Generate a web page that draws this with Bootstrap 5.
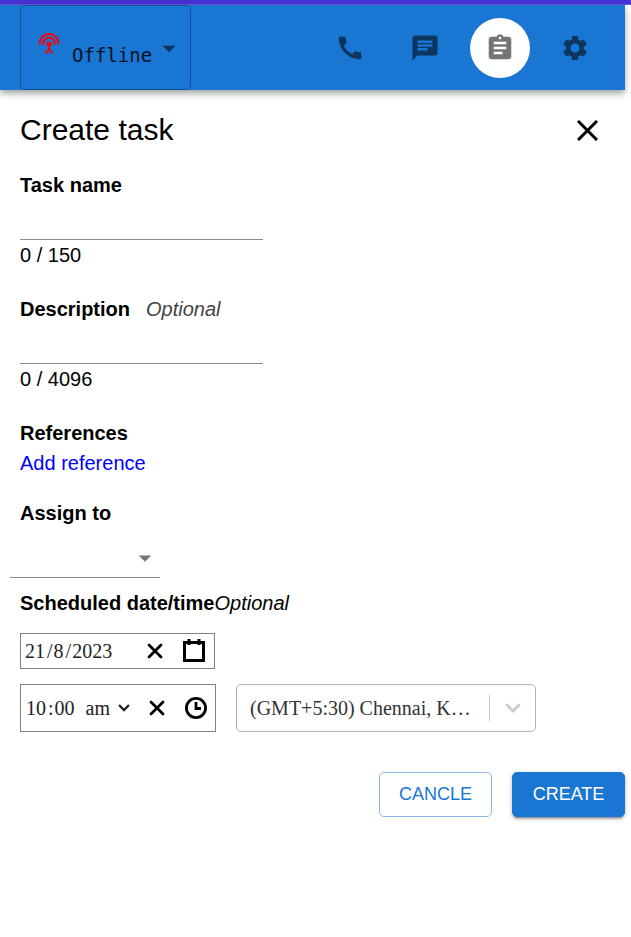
<!DOCTYPE html>
<html lang="en">
<head>
<meta charset="utf-8">
<meta name="viewport" content="width=device-width, initial-scale=1">
<title>Create task</title>
<link href="https://cdn.jsdelivr.net/npm/bootstrap@5.3.0/dist/css/bootstrap.min.css" rel="stylesheet">
<style>
  body { font-family: "Liberation Sans", Arial, sans-serif; font-size: 20px; line-height: 30px; color: #000; background: #fff; }
  .top-strip { height: 5px; background: #4733d6; border-bottom: 1px solid #6b59e0; }
  .page { margin-right: 6px; }
  .app-bar { background: #1976d2; height: 85px; padding: 0 20px; box-shadow: 0 3px 5px -1px rgba(0,0,0,.2), 0 5px 6px rgba(0,0,0,.14), 0 1px 12px rgba(0,0,0,.12); }
  .tab-icons { gap: 15px; }
  .status-btn { width: 171px; padding: 0 9px 0 17px; border: 1px solid #125394; border-radius: 5px; background: transparent; color: #04111f; font-family: "DejaVu Sans Mono", monospace; font-size: 19px; }
  .status-btn .label-text { padding: 14px 4px 0 10px; }
  .status-btn .signal { margin-bottom: 8px; color: red; }
  .status-btn .caret { color: #0c3661; }
  .bar-icon { width: 60px; height: 60px; border-radius: 50%; }
  .bar-icon svg { width: 30px; height: 30px; }
  svg { display: block; fill: currentColor; flex: none; }
  svg.line { fill: none; stroke: currentColor; }
  .plain-btn { padding: 0; border: 0; background: transparent; color: #000; }
  .plain-btn.bar-icon { color: #0c3661; }
  .plain-btn.bar-icon.active { background: #fff; color: #757575; }
  .task-form { padding: 20px 0 20px 20px; }
  .page-title { font-size: 30px; line-height: 40px; font-weight: 400; margin-bottom: 20px; }
  .close-btn { padding: 0 27px 20px 0; }
  .line-input { display: block; width: 243px; height: 40px; border: 0; border-bottom: 1px solid #8c8c8c; border-radius: 0; padding: 0; outline: 0; background: transparent; }
  .form-block { margin-bottom: 24px; }
  .muted-opt { color: #444; margin-left: 16px; }
  .add-link { color: #00f; text-decoration: none; margin-bottom: 20px; }
  .assign { width: 150px; margin: 10px 0 10px -10px; border-bottom: 1px solid #8c8c8c; }
  .assign svg { color: #757575; }
  .bare { appearance: none; border: 0; outline: 0; padding: 0; background: transparent; color: #222; }
  .assign select { width: 120px; height: 39px; }
  .picker { border: 1px solid #808080; font-family: "Liberation Serif", "Times New Roman", serif; color: #222; }
  .picker input { height: 28px; }
  .picker-actions { gap: 18px; }
  .date-box { width: 195px; height: 36px; margin: 15px 0; padding: 0 8px 0 4px; }
  .time-box { width: 196px; height: 48px; padding: 0 7px 0 5px; }
  .w1 { width: 11px; } .w2 { width: 21px; } .w4 { width: 42px; }
  .sep { padding: 0 1px; }
  .ampm { width: 32px; margin-left: 10px; }
  .time-row { gap: 20px; }
  .zone { width: 300px; height: 48px; border: 1px solid #b3b3b3; border-radius: 5px; padding-left: 13px; font-family: "Liberation Serif", "Times New Roman", serif; }
  .zone select { width: 222px; height: 44px; text-overflow: ellipsis; white-space: nowrap; overflow: hidden; color: #333; }
  .zone .divider { width: 1px; height: 26px; background: #ccc; margin-left: 17px; }
  .zone svg { color: #ccc; }
  .actions { gap: 20px; margin-top: 40px; }
  .action { width: 113px; height: 45px; border-radius: 5px; padding: 0; font-size: 18px; --bs-btn-color: #1976d2; --bs-btn-border-color: #8cbae8; }
  .action.filled { --bs-btn-color: #fff; --bs-btn-bg: #1976d2; --bs-btn-border-color: #1976d2; box-shadow: 0 3px 2px -2px rgba(0,0,0,.3), 0 2px 3px rgba(0,0,0,.2), 0 1px 6px rgba(0,0,0,.12); }
</style>
</head>
<body>
<div class="top-strip"></div>
<div class="page">
  <header class="app-bar d-flex justify-content-between align-items-stretch">
    <button type="button" class="status-btn d-flex align-items-center">
      <svg class="signal line" width="24" height="24" viewBox="0 0 24 24" stroke-width="2"><path d="M1.500 12.500V11.500A9.500 9.500 0 0 1 20.500 11.500V12.500M5.300 12.500V11.500A5.700 5.700 0 0 1 16.700 11.500V12.500"/><circle cx="11" cy="12" r="2.600" fill="red" stroke="none"/><path d="M11 12V17L7.500 21.500M11 17L14.500 21.500"/></svg>
      <span class="label-text">Offline</span>
      <svg class="caret" width="26" height="28" viewBox="0 0 24 24"><path d="M6 10l6 6 6-6z"/></svg>
    </button>
    <nav class="tab-icons d-flex align-items-center" aria-label="Main">
      <button type="button" class="plain-btn bar-icon d-flex align-items-center justify-content-center" aria-label="Calls"><svg viewBox="0 0 24 24"><path d="M20.010 15.380c-1.230 0-2.420-.2-3.530-.56-.35-.12-.74-.03-1.010.24l-1.570 1.970c-2.830-1.350-5.480-3.900-6.890-6.830l1.950-1.660c.27-.28.35-.67.24-1.020-.37-1.110-.56-2.300-.56-3.530 0-.54-.45-.99-.99-.99H4.190C3.650 3 3 3.240 3 3.990 3 13.280 10.730 21 20.010 21c.71 0 .99-.63.99-1.180v-3.450c0-.54-.45-.99-.99-.99z"/></svg></button>
      <button type="button" class="plain-btn bar-icon d-flex align-items-center justify-content-center" aria-label="Messages"><svg viewBox="0 0 24 24"><path d="M20 2H4c-1.100 0-1.990.9-1.990 2L2 22l4-4h14c1.100 0 2-.9 2-2V4c0-1.100-.9-2-2-2zM6 9h12v2H6V9zm8 5H6v-2h8v2zm4-6H6V6h12v2z"/></svg></button>
      <button type="button" class="plain-btn bar-icon active d-flex align-items-center justify-content-center" aria-label="Tasks"><svg viewBox="0 0 24 24"><path d="M19 3h-4.180C14.400 1.840 13.300 1 12 1c-1.300 0-2.400.84-2.820 2H5c-1.100 0-2 .9-2 2v14c0 1.100.9 2 2 2h14c1.100 0 2-.9 2-2V5c0-1.100-.9-2-2-2zm-7 0c.55 0 1 .45 1 1s-.45 1-1 1-1-.45-1-1 .45-1 1-1zm2 14H7v-2h7v2zm3-4H7v-2h10v2zm0-4H7V7h10v2z"/></svg></button>
      <button type="button" class="plain-btn bar-icon d-flex align-items-center justify-content-center" aria-label="Settings"><svg viewBox="0 0 24 24"><path d="M19.140 12.940c.04-.3.060-.61.060-.94 0-.32-.02-.64-.07-.94l2.030-1.580c.18-.14.230-.41.120-.61l-1.920-3.320c-.12-.22-.37-.29-.59-.22l-2.390.96c-.5-.38-1.030-.7-1.620-.94l-.36-2.540c-.04-.24-.24-.41-.48-.41h-3.840c-.24 0-.43.170-.47.410l-.36 2.540c-.59.240-1.130.570-1.620.940l-2.390-.96c-.22-.08-.47 0-.59.220L2.740 8.870c-.12.210-.08.470.120.610l2.030 1.580c-.05.300-.09.630-.09.940s.02.640.070.940l-2.030 1.580c-.18.140-.23.410-.12.610l1.920 3.320c.12.220.370.290.590.220l2.390-.96c.5.380 1.030.7 1.620.94l.36 2.540c.05.240.240.410.480.410h3.840c.24 0 .44-.17.470-.41l.36-2.540c.59-.24 1.130-.56 1.620-.94l2.390.96c.22.080.470 0 .59-.22l1.920-3.320c.12-.22.070-.47-.12-.61l-2.010-1.580zM12 15.600c-1.980 0-3.600-1.620-3.600-3.600s1.620-3.600 3.600-3.600 3.600 1.620 3.600 3.600-1.620 3.600-3.600 3.600z"/></svg></button>
    </nav>
  </header>

  <form class="task-form">
    <div class="d-flex justify-content-between align-items-center">
      <h1 class="page-title">Create task</h1>
      <button type="button" class="plain-btn close-btn" aria-label="Close"><svg class="line" width="21" height="21" viewBox="0 0 21 21" stroke-width="3"><path d="M1 1L20 20M20 1L1 20"/></svg></button>
    </div>

    <div class="form-block">
      <label class="d-block fw-bold" for="task-name">Task name</label>
      <input id="task-name" class="line-input" type="text" maxlength="150">
      <div>0 / 150</div>
    </div>

    <div class="form-block">
      <label class="d-block" for="task-desc"><b>Description</b><i class="muted-opt">Optional</i></label>
      <input id="task-desc" class="line-input" type="text" maxlength="4096">
      <div>0 / 4096</div>
    </div>

    <div class="fw-bold">References</div>
    <a class="add-link d-table" href="#">Add reference</a>

    <label class="d-block fw-bold" for="assign">Assign to</label>
    <div class="assign d-flex align-items-center">
      <select id="assign" class="bare"><option></option></select>
      <svg width="30" height="30" viewBox="0 0 24 24"><path d="M7 10l5 5 5-5z"/></svg>
    </div>

    <div><b>Scheduled date/time</b><i>Optional</i></div>
    <div class="picker date-box d-flex align-items-center justify-content-between">
      <div class="d-flex align-items-center">
        <input class="bare w2" value="21" aria-label="Day"><span class="sep">/</span><input class="bare w1" value="8" aria-label="Month"><span class="sep">/</span><input class="bare w4" value="2023" aria-label="Year">
      </div>
      <div class="picker-actions d-flex align-items-center">
        <button type="button" class="plain-btn" aria-label="Clear date"><svg class="line" width="17" height="16" viewBox="0 0 17 16" stroke-width="2.800" stroke-linecap="round"><path d="M2 2L14 14M14 2L2 14"/></svg></button>
        <button type="button" class="plain-btn" aria-label="Open calendar"><svg class="line" width="24" height="24" viewBox="0 0 24 24" stroke-width="3"><path d="M2.500 3.500H21.500V21.500H2.500zM7 0V6M17 0V6"/></svg></button>
      </div>
    </div>

    <div class="time-row d-flex">
      <div class="picker time-box d-flex align-items-center justify-content-between">
        <div class="d-flex align-items-center">
          <input class="bare w2" value="10" aria-label="Hour"><span class="sep">:</span><input class="bare w2" value="00" aria-label="Minute">
          <select class="bare ampm" aria-label="AM or PM"><option>am</option><option>pm</option></select>
          <svg class="line" width="12" height="10" viewBox="0 0 12 10" stroke-width="2.300"><path d="M1 2L6 7L11 2"/></svg>
        </div>
        <div class="picker-actions d-flex align-items-center">
          <button type="button" class="plain-btn" aria-label="Clear time"><svg class="line" width="17" height="16" viewBox="0 0 17 16" stroke-width="2.800" stroke-linecap="round"><path d="M2 2L14 14M14 2L2 14"/></svg></button>
          <button type="button" class="plain-btn" aria-label="Open clock"><svg class="line" width="24" height="24" viewBox="0 0 24 24" stroke-width="2.800"><circle cx="12" cy="12" r="9.600"/><path d="M12 6V12.500H17"/></svg></button>
        </div>
      </div>
      <div class="zone d-flex align-items-center">
        <select class="bare" aria-label="Time zone"><option>(GMT+5:30) Chennai, Kolkata, Mumbai, New Delhi</option></select>
        <span class="divider"></span>
        <svg class="line mx-auto" width="16" height="12" viewBox="0 0 16 12" stroke-width="3" stroke-linecap="round"><path d="M2 3L8 9L14 3"/></svg>
      </div>
    </div>

    <div class="actions d-flex justify-content-end">
      <button type="button" class="btn action">CANCLE</button>
      <button type="submit" class="btn action filled">CREATE</button>
    </div>
  </form>
</div>
<script src="https://cdn.jsdelivr.net/npm/bootstrap@5.3.0/dist/js/bootstrap.bundle.min.js"></script>
</body>
</html>
